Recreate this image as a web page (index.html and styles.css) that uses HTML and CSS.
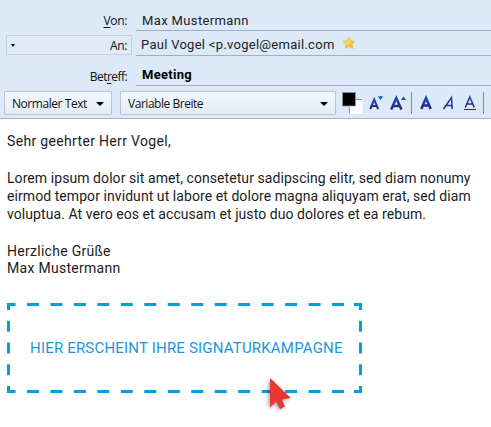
FILE: index.html
```html
<!DOCTYPE html>
<html lang="de">
<head>
<meta charset="utf-8">
<title>Meeting</title>
<link rel="stylesheet" href="styles.css">
</head>
<body>
<header class="compose">
  <div class="row from"><div class="label"><span><u>V</u>on:</span></div><div class="field"><span class="t-from">Max Mustermann</span></div></div>
  <div class="row to"><div class="label picker"><i class="caret small"></i><span>An:</span></div><div class="field"><span class="t-to">Paul Vogel &lt;p.vogel@email.com</span>
    <svg class="star" width="14" height="14" viewBox="0 0 14 14"><defs><linearGradient id="g" x2="0.6" y2="1"><stop offset="0" stop-color="#fff3a0"/><stop offset="1" stop-color="#f5b921"/></linearGradient></defs><path d="M7 1.2 8.8 4.9 12.8 5.4 9.9 8.2 10.7 12.2 7 10.5 3.3 12.2 4 8.2 1.2 5.4 5.2 4.9Z" fill="url(#g)" stroke="#e9b63c" stroke-width=".9" stroke-linejoin="round"/></svg></div></div>
  <div class="row subject"><div class="label"><span>Bet<u>r</u>eff:</span></div><div class="field"><span class="t-subject">Meeting</span></div></div>
  <div class="toolbar">
    <div class="select style"><span>Normaler Text</span><i class="caret"></i></div>
    <div class="select face"><span>Variable Breite</span><i class="caret"></i></div>
    <svg class="tools" width="149" height="26" viewBox="342 91 149 26">
      <defs><linearGradient id="b" x2="0" y2="1"><stop offset="0" stop-color="#1554b8"/><stop offset="1" stop-color="#26207c"/></linearGradient></defs>
      <path d="M349 99h13.500v15H349z" fill="#fff"/><path d="M349.500 107v6.500M356 99.500h6" stroke="#8c959e" fill="none"/>
      <path d="M342.500 92.500h13V106h-13z" fill="#000" stroke="#999" stroke-width=".6"/>
      <g fill="none" stroke="url(#b)">
        <path d="M370.300 109 374.200 99.500 378.100 109M371.800 106h4.800" stroke-width="2"/>
        <path d="M391.200 109.500 396.300 98 401.400 109.500M393 106h6.600" stroke-width="2.500"/>
        <path d="M421.300 109 426 98 430.700 109M423 105.500h6" stroke-width="2.500"/>
        <path d="M443.500 109 451.500 97.500 452.200 109M446.200 105.500h5.800" stroke-width="1.500"/>
        <path d="M465.300 107.500 469.800 97 474.300 107.500M467 104h5.600" stroke-width="1.500"/>
      </g>
      <path d="M378 96.200h5L380.500 100ZM401 100h5L403.500 96.200Z" fill="#1955b5"/>
      <path d="M464 109.500h12" stroke="#28258a"/>
      <path d="M411.500 92v22M483.500 92v22" stroke="#7f8c99"/>
    </svg>
  </div>
</header>
<main class="message">
  <p><span class="greeting">Sehr geehrter Herr Vogel,</span></p>
  <p class="text"><span>Lorem ipsum dolor sit amet, consetetur sadipscing elitr, sed diam nonumy</span><br><span>eirmod tempor invidunt ut labore et dolore magna aliquyam erat, sed diam</span><br><span>voluptua. At vero eos et accusam et justo duo dolores et ea rebum.</span></p>
  <p class="closing"><span>Herzliche Grüße</span><br><span>Max Mustermann</span></p>
  <section class="campaign">
    <svg class="frame" width="355" height="90" viewBox="0 0 355 90"><g fill="none" stroke="#009fe3" stroke-width="3"><path d="M1.500 1.500h352M1.500 88.500h352" stroke-dasharray="12 11.467" stroke-dashoffset="5"/><path d="M1.500 1.500v87M353.500 1.500v87" stroke-dasharray="11 10.750" stroke-dashoffset="5.500"/><path d="M0 1.500h8M347 1.500h8M0 88.500h8M347 88.500h8"/></g></svg>
    <span class="t-campaign">HIER ERSCHEINT IHRE SIGNATURKAMPAGNE</span>
    <svg class="cursor" width="36" height="46" viewBox="0 0 36 46"><path d="M8 6V35.500L14.200 29.500 18 37 23 34.500 19.800 27.500 28.800 26Z" fill="#e73732"/></svg>
  </section>
</main>
</body>
</html>
```
FILE: styles.css
```css
* { box-sizing: border-box; }
body { margin: 0; width: 491px; height: 427px; overflow: hidden; background: #fff; color: #1c1c1c; font: 14px/18px Roboto, sans-serif; }
p { margin: 0; }
span { white-space: nowrap; }
.compose { height: 119px; padding-top: 10px; background: #dbe9f8; border-bottom: 1px solid #a6b5c8; }
.row { display: flex; gap: 5px; }
.from { height: 21px; }
.to { height: 25px; }
.subject { height: 30px; }
.label { width: 126px; margin-left: 5px; display: flex; justify-content: flex-end; align-items: center; padding-right: 4px; font: 12px/16px "Open Sans", sans-serif; letter-spacing: -.35px; color: #111; }
.label u { text-underline-offset: 2px; }
.picker { height: 20px; margin: 4px 0 0 6px; width: 126px; justify-content: space-between; padding-left: 4px; border: 1px solid #c5d1df; background: #dfeaf6; }
.picker span { padding-top: 2px; }
.picker + .field { margin-left: -1px; }
.subject .label { padding-top: 11px; height: 30px; letter-spacing: -.55px; }
.field { flex: 1; display: flex; align-items: center; border-bottom: 1px solid #9eafc3; padding-left: 5px; font-size: 13px; color: #222; }
.from .field { padding: 2px 0 0 6px; }
.to .field { padding-top: 3px; }
.subject .field { padding: 8px 0 0 6px; }
.t-from { letter-spacing: .37px; }
.t-to { letter-spacing: .28px; }
.t-subject { font-weight: 700; letter-spacing: .3px; color: #000; }
.star { margin: 0 0 3px 7px; }
.toolbar { display: flex; padding: 5px 0 0 4px; height: 32px; }
.select { height: 24px; display: flex; align-items: center; justify-content: space-between; border: 1px solid #b7c4d3; border-radius: 1px; background: linear-gradient(#f2f7fc, #e1ebf6); padding: 1px 7px 0; font: 12px/16px "Open Sans", sans-serif; letter-spacing: -.44px; color: #111; }
.style { width: 108px; }
.face { width: 216px; margin-left: 8px; letter-spacing: -.47px; }
.tools { margin-left: 6px; }
.caret { border: 4px solid transparent; border-top-color: #000; border-bottom: 0; }
.caret.small { border-width: 3px 2px 0; }
.message { padding: 13px 0 0 7px; }
.message p { margin-bottom: 19px; }
.message p + p { margin-bottom: 20px; }
.greeting { letter-spacing: .33px; }
.text { letter-spacing: .07px; }
.message .closing { line-height: 17px; margin-bottom: 26px; letter-spacing: .28px; }
.message p.closing { margin-bottom: 26px; }
.campaign { position: relative; width: 355px; height: 90px; display: flex; align-items: center; padding-left: 23px; color: #1a97dc; }
.t-campaign { font-size: 15px; letter-spacing: .19px; }
.frame { position: absolute; left: 0; top: 0; }
.cursor { position: absolute; left: 255px; top: 69px; filter: drop-shadow(-1px 1px 2px rgba(0,0,0,.45)); }
```
